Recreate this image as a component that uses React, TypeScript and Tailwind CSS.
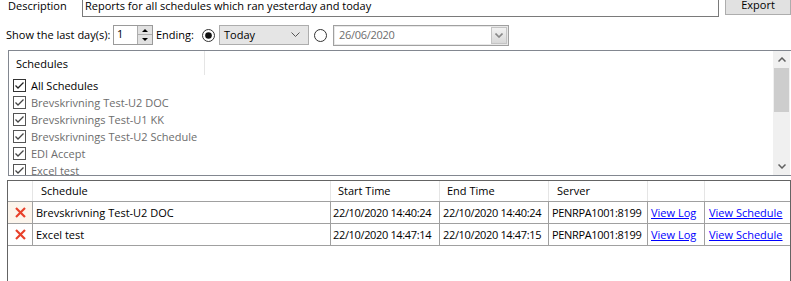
import React from "react";

const items = [
  "All Schedules",
  "Brevskrivning Test-U2 DOC",
  "Brevskrivnings Test-U1 KK",
  "Brevskrivnings Test-U2 Schedule",
  "EDI Accept",
  "Excel test",
];

const rows = [
  { name: "Brevskrivning Test-U2 DOC", start: "22/10/2020 14:40:24", end: "22/10/2020 14:40:24", sel: true },
  { name: "Excel test", start: "22/10/2020 14:47:14", end: "22/10/2020 14:47:15", sel: false },
];

function Check({ dark }: { dark: boolean }) {
  return (
    <svg width="13" height="13" viewBox="0 0 13 13" className="shrink-0">
      <rect x="0.5" y="0.5" width="12" height="12" fill="#fff" stroke={dark ? "#333" : "#555"} />
      <polyline points="2.5,6.5 5,9 10.5,3.5" fill="none" stroke={dark ? "#222" : "#444"} strokeWidth="1.3" />
    </svg>
  );
}

function Radio({ checked }: { checked: boolean }) {
  return (
    <svg width="13" height="13" viewBox="0 0 13 13" className="shrink-0">
      <circle cx="6.5" cy="6.5" r="6" fill="#fff" stroke="#333" />
      {checked && <circle cx="6.5" cy="6.5" r="3.3" fill="#111" />}
    </svg>
  );
}

function RedX() {
  return (
    <svg width="11" height="11" viewBox="0 0 11 11">
      <line x1="1" y1="1" x2="10" y2="10" stroke="#e8402a" strokeWidth="2.2" />
      <line x1="10" y1="1" x2="1" y2="10" stroke="#e8402a" strokeWidth="2.2" />
    </svg>
  );
}

export default function App() {
  const cellBase = "h-full flex items-center border-r border-[#a0a0a0] overflow-hidden whitespace-nowrap";
  return (
    <div className="w-[791px] h-[281px] bg-white overflow-hidden text-[11px] text-black font-['Open_Sans',sans-serif] leading-[14px]">
      {/* Row 1 */}
      <div className="flex h-[17px]">
        <div className="pl-[8px] w-[82px] leading-[12px]">Description</div>
        <div className="w-[637px] h-[17px] border-l border-r border-b border-[#7a7a7a] pl-[2px] leading-[12px]">
          Reports for all schedules which ran yesterday and today
        </div>
        <div className="ml-[6px] w-[66px] h-[15px] bg-[#e1e1e1] border-l border-r border-b border-[#adadad] flex items-start justify-center leading-[10px]">
          Export
        </div>
      </div>

      {/* Row 2 */}
      <div className="flex items-center h-[20px] mt-[8px]">
        <div className="pl-[6px] w-[113px]">Show the last day(s):</div>
        <div className="w-[40px] h-[20px] border border-[#9a9a9a] flex">
          <div className="flex-1 pl-[3px] leading-[16px]">1</div>
          <div className="w-[15px] flex flex-col border-l border-[#adadad]">
            <div className="h-[9px] bg-[#e1e1e1] border-b border-[#adadad] flex items-center justify-center">
              <div className="w-0 h-0 border-l-[3px] border-r-[3px] border-b-[3px] border-l-transparent border-r-transparent border-b-black" />
            </div>
            <div className="flex-1 bg-[#e1e1e1] flex items-center justify-center">
              <div className="w-0 h-0 border-l-[3px] border-r-[3px] border-t-[3px] border-l-transparent border-r-transparent border-t-black" />
            </div>
          </div>
        </div>
        <div className="ml-[3px] w-[46px]">Ending:</div>
        <Radio checked={true} />
        <div className="ml-[4px] w-[90px] h-[20px] bg-[#e5e5e5] border border-[#adadad] flex items-center pl-[4px]">
          <span className="flex-1">Today</span>
          <svg width="9" height="6" viewBox="0 0 9 6" className="mr-[8px]">
            <polyline points="0.5,0.5 4.5,4.5 8.5,0.5" fill="none" stroke="#555" strokeWidth="1" />
          </svg>
        </div>
        <div className="ml-[5px]"><Radio checked={false} /></div>
        <div className="ml-[6px] w-[176px] h-[21px] border border-[#a0a0a0] flex items-center pl-[5px] pr-[1px] shadow-[inset_0_0_0_1px_#e8e8e8]">
          <span className="flex-1 text-[#6d6d6d] tracking-[-0.3px]">26/06/2020</span>
          <div className="w-[16px] h-[17px] border border-[#c4c4c4] bg-gradient-to-b from-[#f2f2f2] to-[#d8d8d8] flex items-center justify-center">
            <svg width="8" height="5" viewBox="0 0 8 5">
              <polyline points="0.5,0.5 4,4 7.5,0.5" fill="none" stroke="#888" strokeWidth="1.6" />
            </svg>
          </div>
        </div>
      </div>

      {/* Schedules list */}
      <div className="mt-[5px] ml-[8px] w-[785px] h-[126px] border border-[#828790] flex overflow-hidden">
        <div className="flex-1 flex flex-col overflow-hidden">
          <div className="h-[26px] shrink-0 flex">
            <div className="w-[196px] pl-[7px] pt-[6px] border-r border-[#e5e5e5] h-[24px]">Schedules</div>
          </div>
          {items.map((it, i) => (
            <div key={it} className="h-[17px] shrink-0 flex items-center pl-[4px] gap-[5px]">
              <Check dark={i === 0} />
              <span className={i === 0 ? "text-black" : "text-[#6d6d6d]"}>{it}</span>
            </div>
          ))}
        </div>
        <div className="w-[17px] bg-[#f0f0f0] flex flex-col items-center shrink-0 mr-[2px]">
          <div className="h-[17px] flex items-center justify-center">
            <svg width="8" height="5" viewBox="0 0 8 5">
              <polyline points="0.5,4.5 4,1 7.5,4.5" fill="none" stroke="#606060" strokeWidth="1.5" />
            </svg>
          </div>
          <div className="w-[15px] h-[44px] bg-[#cdcdcd]" />
          <div className="flex-1" />
          <div className="h-[17px] flex items-center justify-center">
            <svg width="8" height="5" viewBox="0 0 8 5">
              <polyline points="0.5,0.5 4,4 7.5,0.5" fill="none" stroke="#606060" strokeWidth="1.5" />
            </svg>
          </div>
        </div>
      </div>

      {/* Grid */}
      <div className="mt-[4px] ml-[7px] w-[784px] h-[110px] border-l border-t border-r border-[#646464]">
        <div className="flex h-[21px] border-b border-[#a0a0a0]">
          <div className="w-[25px] h-full border-r border-[#e5e5e5]" />
          <div className="w-[298px] h-full border-r border-[#e5e5e5] pl-[8px] flex items-center">Schedule</div>
          <div className="w-[109px] h-full border-r border-[#e5e5e5] pl-[7px] flex items-center">Start Time</div>
          <div className="w-[109px] h-full border-r border-[#e5e5e5] pl-[7px] flex items-center">End Time</div>
          <div className="w-[99px] h-full border-r border-[#e5e5e5] pl-[8px] flex items-center">Server</div>
          <div className="w-[57px] h-full border-r border-[#e5e5e5]" />
          <div className="w-[85px] h-full" />
        </div>
        {rows.map((r) => (
          <div key={r.name} className="flex h-[22px] border-b border-[#a0a0a0]">
            <div className={`w-[25px] ${cellBase} justify-center ${r.sel ? "bg-[#fcf5ec]" : "bg-white"}`}>
              <RedX />
            </div>
            <div className={`w-[298px] ${cellBase} pl-[3px]`}>{r.name}</div>
            <div className={`w-[109px] ${cellBase} pl-[2px] tracking-[-0.35px]`}>{r.start}</div>
            <div className={`w-[109px] ${cellBase} pl-[3px] tracking-[-0.35px]`}>{r.end}</div>
            <div className={`w-[99px] ${cellBase} pl-[3px] tracking-[-0.35px]`}>PENRPA1001:8199</div>
            <div className={`w-[57px] ${cellBase} pl-[3px]`}>
              <span className="text-[#0000ff] underline">View Log</span>
            </div>
            <div className="w-[85px] h-full flex items-center pl-[4px] whitespace-nowrap overflow-hidden">
              <span className="text-[#0000ff] underline">View Schedule</span>
            </div>
          </div>
        ))}
      </div>
    </div>
  );
}
